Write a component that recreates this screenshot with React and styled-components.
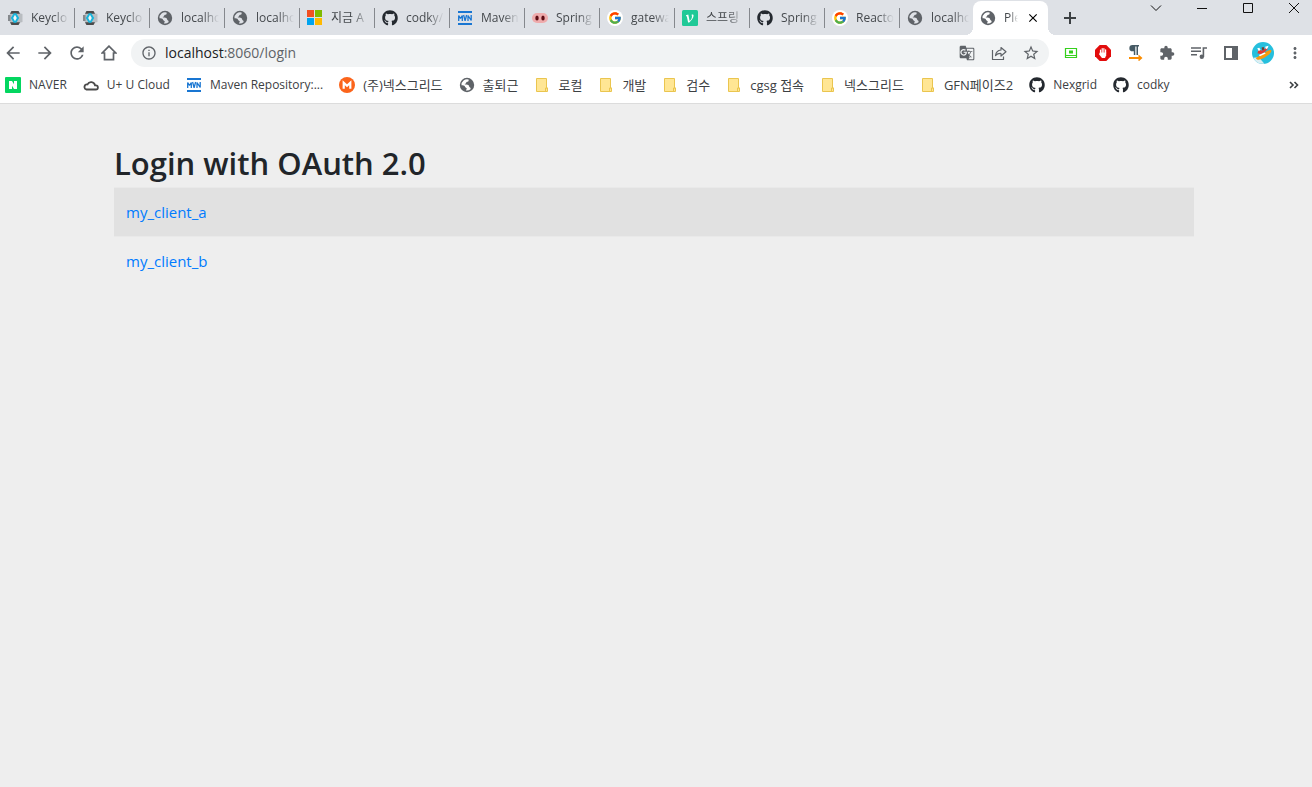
import React from "react";
import styled, { createGlobalStyle } from "styled-components";
import { FaGithub } from "react-icons/fa";
import { FcGoogle } from "react-icons/fc";
import {
  MdArrowBack, MdArrowForward, MdRefresh, MdInfoOutline, MdGTranslate,
  MdStarBorder, MdExtension, MdMoreVert, MdClose,
} from "react-icons/md";

const uiFont = '"Open Sans", "Noto Sans CJK KR", sans-serif';

const GlobalStyle = createGlobalStyle`
  * { box-sizing: border-box; }
  body { margin: 0; background: #eeeeee; font-family: ${uiFont}; color: #212529; }
  button { font: inherit; border: 0; padding: 0; background: none; cursor: pointer; }
  svg { display: block; flex: none; }
`;

const Chrome = styled.header`
  background: #fff;
  border-bottom: 1px solid #dcdcdc;
`;

const TabStrip = styled.div`
  display: flex;
  align-items: flex-start;
  height: 35px;
  background: #dee1e6;
  overflow: hidden;
`;

const Tabs = styled.div`
  display: flex;
  align-items: flex-end;
  height: 35px;
`;

const TabButton = styled.button`
  position: relative;
  display: flex;
  align-items: center;
  gap: 8px;
  width: 75px;
  height: 34px;
  margin-left: ${(p) => (p.$active ? "-2px" : "0")};
  padding: 0 ${(p) => (p.$active ? "8px" : "6px")} 0 7px;
  font-size: 12px;
  line-height: 16px;
  color: #45494d;
  background: ${(p) => (p.$active ? "#fff" : "transparent")};
  border-radius: 8px 8px 0 0;

  ${(p) => p.$divider && `
    &::after {
      content: "";
      position: absolute;
      right: 0;
      top: 7px;
      width: 1px;
      height: 20px;
      background: #85888d;
    }
  `}

  ${(p) => p.$active && `
    &::before, &::after {
      content: "";
      position: absolute;
      bottom: 0;
      width: 8px;
      height: 8px;
    }
    &::before { left: -8px; background: radial-gradient(circle at 0 0, transparent 8px, #fff 8px); }
    &::after { right: -8px; background: radial-gradient(circle at 100% 0, transparent 8px, #fff 8px); }
  `}
`;

const TabTitle = styled.span`
  flex: 1;
  min-width: 0;
  overflow: hidden;
  white-space: nowrap;
  text-align: left;
  mask-image: linear-gradient(to left, transparent, #000 ${(p) => (p.$short ? "8px" : "16px")});
`;

const NewTab = styled.button`
  display: grid;
  place-items: center;
  width: 28px;
  height: 28px;
  margin: 4px 0 0 8px;
`;

const WindowControls = styled.div`
  display: flex;
  margin-left: auto;
  margin-right: -5px;
`;

const WindowButton = styled.button`
  display: grid;
  place-items: center;
  width: 46px;
  height: 14px;
`;

const Toolbar = styled.div`
  display: flex;
  align-items: center;
  gap: 10px;
  height: 36px;
  padding: 0 5px 0 1px;
`;

const ButtonGroup = styled.div`
  display: flex;
  gap: 8px;
`;

const IconButton = styled.button`
  display: grid;
  place-items: center;
  width: 24px;
  height: 24px;
  color: #5f6368;
`;

const AddressBar = styled.div`
  flex: 1;
  display: flex;
  align-items: center;
  height: 28px;
  padding: 0 6px 0 10px;
  border-radius: 14px;
  background: #f1f3f4;
  color: #5f6368;
`;

const Address = styled.a`
  flex: 1;
  margin-left: 8px;
  font-size: 14px;
  line-height: 20px;
  color: #5f6368;
  text-decoration: none;
`;

const Host = styled.span`
  color: #202124;
`;

const BookmarkBar = styled.nav`
  display: flex;
  align-items: center;
  gap: 16px;
  height: 32px;
  padding: 0 10px 4px 5px;
`;

const Bookmark = styled.a`
  display: flex;
  align-items: center;
  gap: 8px;
  font-size: ${(p) => (p.$korean ? "13px" : "12px")};
  line-height: 16px;
  color: #3c4043;
  white-space: nowrap;
  text-decoration: none;
`;

const Overflow = styled.button`
  margin-left: auto;
`;

const Page = styled.main`
  padding: 40px 118px 0 114px;
`;

const Heading = styled.h2`
  margin: 0 0 5px;
  font-size: 31px;
  line-height: 38px;
  font-weight: 600;
`;

const ClientTable = styled.table`
  width: 100%;
  border-collapse: collapse;
  font-size: 15px;
  line-height: 24px;
`;

const ClientRow = styled.tr`
  &:nth-child(odd) { background: #e1e1e1; }
`;

const ClientCell = styled.td`
  padding: 12px;
  border-top: 1px solid #e9e9e9;
`;

const ClientLink = styled.a`
  color: #007bff;
  text-decoration: none;
`;

const Svg = ({ children, size = 16, ...rest }) => (
  <svg width={size} height={size} viewBox="0 0 16 16" fill="none" aria-hidden="true" {...rest}>{children}</svg>
);

const Globe = ({ land = "#dee1e6" }) => (
  <Svg>
    <circle cx="8" cy="8" r="7.2" fill="#5f6368" />
    <path d="M9.6 2.5C10 4.3 9 4.9 7.4 5 7.3 6.4 6.600 6.800 5.600 7 6 7.800 8.500 7.300 9.600 8.200 10.300 9 10 9.900 11 10.400 11.600 10.800 11.800 11.400 11.500 12.300A5.600 5.600 0 0 1 7 13.500C7.100 12.300 8 12.200 7.700 11.300 7.300 10.500 6 10.600 5.800 9.200 5.500 8.200 3.900 8.300 2.500 8.200A5.600 5.600 0 0 1 9.600 2.500Z" fill={land} />
  </Svg>
);

const BookmarkGlobe = () => <Globe land="#fff" />;

const Keycloak = () => (
  <Svg>
    <path d="M4.500 1h7l1.300 2.200L15.500 4v8l-2.700.8L11.500 15h-7L.8 8Z" fill="#b9bdc1" />
    <path d="M4.500 1h7l1.500 2.800H3ZM3 12.200h10L11.500 15h-7Z" fill="#4b4b4b" />
    <path d="M1 5h2.500v6H1z" fill="#85898d" />
    <path d="M6.800 3.200h2.400L12.200 8l-3 4.800H6.800L3.800 8Z" fill="#17b5dc" />
    <path d="M8 4.800 6.200 8 8 11.200 9.800 8Z" fill="#f5f5f5" />
  </Svg>
);

const Microsoft = () => (
  <Svg>
    <path d="M0 0h7v7H0z" fill="#f25022" /><path d="M8 0h7v7H8z" fill="#7fba00" />
    <path d="M0 8h7v7H0z" fill="#00a4ef" /><path d="M8 8h7v7H8z" fill="#ffb900" />
  </Svg>
);

const Maven = () => (
  <Svg>
    <path d="M1 1h14v2H1zM1 13h14v2H1z" fill="#1976d2" />
    <path d="M1.700 11V5.500L3.500 8.500 5.300 5.500V11M6.600 5 8.100 10.800 9.600 5M11 11V5.500L14.200 10.500V5" stroke="#1976d2" strokeWidth="1.300" strokeLinejoin="bevel" />
  </Svg>
);

const PigNose = () => (
  <Svg>
    <rect x="0" y="3" width="16" height="10" rx="5" fill="#efabac" />
    <ellipse cx="5" cy="8" rx="1.700" ry="2.600" fill="#5d0d14" />
    <ellipse cx="11" cy="8" rx="1.700" ry="2.600" fill="#5d0d14" />
  </Svg>
);

const Google = () => (
  <Svg><circle cx="8" cy="8" r="8" fill="#fff" /><FcGoogle x="1" y="1" size={14} /></Svg>
);

const Velog = () => (
  <Svg>
    <rect width="16" height="16" rx="1.500" fill="#20c997" />
    <path d="M4 5.300 6.300 4.600 7.600 11C9.500 9.400 10.600 7 9.600 4.700c1-.6 2-.3 2 .8 0 2-2 4.800-4.400 7H6.100L4.800 6.200H4Z" fill="#fff" />
  </Svg>
);

const Naver = () => (
  <Svg><rect width="16" height="16" rx="1" fill="#03d660" /><path d="M4 4h3l2 3.200V4h3v8H9L7 8.800V12H4Z" fill="#fff" /></Svg>
);

const Cloud = () => (
  <Svg><path d="M3.500 12.500h9.300a2 2 0 0 0 0-4.200h-.8A4 4 0 0 0 4.500 7.400 2.600 2.600 0 0 0 3.500 12.500Z" stroke="#4a4a4a" strokeWidth="1.800" /></Svg>
);

const Nexgrid = () => (
  <Svg>
    <circle cx="8" cy="8" r="8" fill="#fb641b" />
    <path d="M4.700 11.800v-6L8 8.800l3.300-3v6" stroke="#fff" strokeWidth="2.200" />
  </Svg>
);

const Folder = () => (
  <Svg>
    <path d="M2.500 1.500h10v9.500h1v3.500h-11Z" fill="#ffe694" stroke="#eac54f" />
    <path d="M11.500 14v-3h2" stroke="#eac54f" />
  </Svg>
);

const HomeOutline = () => (
  <Svg>
    <path d="M8 1.200 1.300 8H3.500v6.700h9V8h2.200Z" stroke="#5f6368" strokeWidth="1.700" />
  </Svg>
);

const Plus = () => (
  <Svg><path d="M2 8h12M8 2v12" stroke="#3c4043" strokeWidth="2" /></Svg>
);

const Share = () => (
  <Svg>
    <path d="M1.500 5v9.500h11v-3M4.500 10.500C5 7 7 5.300 10 5V2.500L15 6.700 10 11V8.500C7.500 8.300 6 9 4.500 10.500Z" stroke="#5f6368" strokeWidth="1.200" strokeLinejoin="round" />
  </Svg>
);

const Capture = () => (
  <Svg>
    <path d="M2.500 3.500h11v7h-11zM2.500 10.500v2h11v-2" stroke="#35d01c" strokeWidth="1.200" />
    <path d="M6 5.500h4v3H6z" fill="#35d01c" />
  </Svg>
);

const Blocker = () => (
  <Svg>
    <path d="M4.700 0h6.600L16 4.700v6.600L11.300 16H4.700L0 11.300V4.700Z" fill="#e20c0c" />
    <path d="M5.500 8.500V5M7.200 7.500V3.600M8.900 7.500V3.600M10.600 8V4.800" stroke="#fff" strokeWidth="1.200" strokeLinecap="round" />
    <path d="M4.900 7.500h6.300v2.800L10 13H7L4 9.200Z" fill="#fff" />
  </Svg>
);

const Pilcrow = () => (
  <Svg>
    <path d="M5.500 0H12v1.500h-1V10H9.500V1.500H8.300V10H6.800V6.300H5.500A3.100 3.100 0 0 1 5.500 0Z" fill="#455a64" />
    <path d="M2 12h9.500V9.500l4 3.500-4 3.500V14H2Z" fill="#fb8c00" />
  </Svg>
);

const MediaQueue = () => (
  <Svg>
    <path d="M0 3h10M0 6.300h10M0 9.700h6" stroke="#5f6368" strokeWidth="1.500" />
    <path d="M12.400 12V3H16" stroke="#5f6368" strokeWidth="1.600" /><circle cx="10.800" cy="11.800" r="2.200" fill="#5f6368" />
  </Svg>
);

const SidePanel = () => (
  <Svg><path d="M1 1h14v14H1ZM3 3v10h6V3Z" fill="#5f6368" fillRule="evenodd" /></Svg>
);

const Avatar = () => (
  <Svg size={22}>
    <circle cx="8" cy="8" r="8" fill="#26bfdd" />
    <path d="M.8 11.500 5 11l4 4.800A8 8 0 0 1 .8 11.500Z" fill="#dceef2" />
    <path d="m2.800 11.600 8.600-5.200c2-1 3-.7 2.700.3-.5 2-5.100 4.900-7.700 5.900-1.600.6-3.300.3-3.600-1Z" fill="#f79a0e" />
    <path d="m5 5.300 2.400 1 3.400-2.500.7 1.100-1.800 2-3 2-2.800-.7Z" fill="#e23b32" />
    <path d="m3.800 4.500 1.500-.4 1 1.800-1.400.6ZM9.500 3.500 12 2.800l-.6 1.700-1.200.7ZM5 9.400l4-1.700 1 .6-4.200 2Z" fill="#fff" />
    <path d="m7 4 1.600-.3.3 1.800-1.500.6Z" fill="#713d34" />
  </Svg>
);

const GithubMark = () => <FaGithub size={16} color="#24292f" />;

const tabs = [
  [Keycloak, "Keyclo"], [Keycloak, "Keyclo"], [Globe, "localho"], [Globe, "localho"],
  [Microsoft, "지금 A"], [GithubMark, "codky/"], [Maven, "Maven"], [PigNose, "Spring"],
  [Google, "gatewa"], [Velog, "스프링"], [GithubMark, "Spring"], [Google, "Reacto"], [Globe, "localho"],
];

const bookmarks = [
  [Naver, "NAVER"], [Cloud, "U+ U Cloud"], [Maven, "Maven Repository:..."], [Nexgrid, "(주)넥스그리드"],
  [BookmarkGlobe, "출퇴근"], [Folder, "로컬"], [Folder, "개발"], [Folder, "검수"], [Folder, "cgsg 접속"],
  [Folder, "넥스그리드"], [Folder, "GFN페이즈2"], [GithubMark, "Nexgrid"], [GithubMark, "codky"],
];

const hasHangul = (text) => /[가-힣]/.test(text);

const navigation = [
  ["Back", <MdArrowBack size={20} />], ["Forward", <MdArrowForward size={20} />],
  ["Reload", <MdRefresh size={20} />], ["Home", <HomeOutline />],
];

const extensions = [
  ["Screen capture", <Capture />], ["Ad blocker", <Blocker />], ["Text direction", <Pilcrow />],
  ["Extensions", <MdExtension size={16} />], ["Media", <MediaQueue />], ["Side panel", <SidePanel />],
  ["Profile", <Avatar />], ["Menu", <MdMoreVert size={18} />],
];

const windowControls = [
  ["Search tabs", "M3 5.500 8 10.500 13 5.500"],
  ["Minimize", "M3 8.500H13"],
  ["Maximize", "M3.500 3.500H12.500V12.500H3.500Z"],
  ["Close", "M3 3 13 13M13 3 3 13"],
];

export default function App() {
  return (
    <>
      <GlobalStyle />
      <Chrome>
        <TabStrip>
          <Tabs>
            {tabs.map(([Icon, title], i) => (
              <TabButton key={i} $divider={i < tabs.length - 1}><Icon /><TabTitle>{title}</TabTitle></TabButton>
            ))}
            <TabButton as="div" $active>
              <Globe land="#fff" />
              <TabTitle $short>Ple</TabTitle>
              <button aria-label="Close tab"><MdClose size={14} /></button>
            </TabButton>
          </Tabs>
          <NewTab aria-label="New tab"><Plus /></NewTab>
          <WindowControls>
            {windowControls.map(([label, d]) => (
              <WindowButton key={label} aria-label={label}><Svg><path d={d} stroke="#111" /></Svg></WindowButton>
            ))}
          </WindowControls>
        </TabStrip>
        <Toolbar>
          <ButtonGroup>
            {navigation.map(([label, icon]) => (
              <IconButton key={label} aria-label={label}>{icon}</IconButton>
            ))}
          </ButtonGroup>
          <AddressBar>
            <MdInfoOutline size={16} />
            <Address href="#"><Host>localhost</Host>:8060/login</Address>
            <ButtonGroup>
              <IconButton aria-label="Translate"><MdGTranslate size={16} /></IconButton>
              <IconButton aria-label="Share"><Share /></IconButton>
              <IconButton aria-label="Bookmark"><MdStarBorder size={18} /></IconButton>
            </ButtonGroup>
          </AddressBar>
          <ButtonGroup>
            {extensions.map(([label, icon]) => (
              <IconButton key={label} aria-label={label}>{icon}</IconButton>
            ))}
          </ButtonGroup>
        </Toolbar>
        <BookmarkBar>
          {bookmarks.map(([Icon, label]) => (
            <Bookmark key={label} href="#" $korean={hasHangul(label)}><Icon />{label}</Bookmark>
          ))}
          <Overflow aria-label="More bookmarks">
            <Svg><path d="m4 5 3 3-3 3M8.500 5l3 3-3 3" stroke="#3c4043" strokeWidth="1.600" /></Svg>
          </Overflow>
        </BookmarkBar>
      </Chrome>
      <Page>
        <Heading>Login with OAuth 2.0</Heading>
        <ClientTable>
          <tbody>
            {["my_client_a", "my_client_b"].map((name) => (
              <ClientRow key={name}><ClientCell><ClientLink href="#">{name}</ClientLink></ClientCell></ClientRow>
            ))}
          </tbody>
        </ClientTable>
      </Page>
    </>
  );
}
